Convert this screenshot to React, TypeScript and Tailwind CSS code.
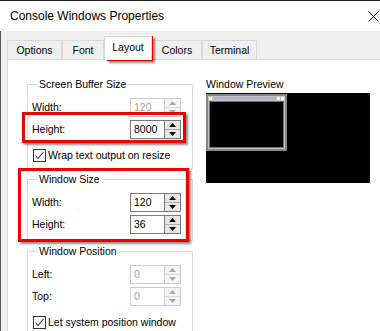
import React from "react"

const Arrow = ({ up, disabled }: { up: boolean; disabled?: boolean }) => (
    <svg width="7" height="4" viewBox="0 0 7 4">
        <polygon points={up ? "3.5,0 7,4 0,4" : "0,0 7,0 3.5,4"} fill={disabled ? "#a8a8a8" : "#000"} />
    </svg>
)

const Spin = ({ value, disabled }: { value: string; disabled?: boolean }) => (
    <div className="flex h-[19px] w-[51px]">
        <div className={"w-[35px] flex items-center pl-[3px] border bg-white " + (disabled ? "border-[#cccccc] text-[#a3a3a3]" : "border-[#7a7a7a]")}>
            {value}
        </div>
        <div className={"w-[16px] flex flex-col border border-l-0 " + (disabled ? "border-[#cccccc]" : "border-[#7a7a7a]")}>
            <div className={"flex-1 flex items-center justify-center border-b " + (disabled ? "bg-[#f4f4f4] border-[#dcdcdc]" : "bg-[#e6e6e6] border-[#adadad]")}>
                <Arrow up disabled={disabled} />
            </div>
            <div className={"flex-1 flex items-center justify-center " + (disabled ? "bg-[#f4f4f4]" : "bg-[#e6e6e6]")}>
                <Arrow up={false} disabled={disabled} />
            </div>
        </div>
    </div>
)

const Row = ({ label, value, disabled }: { label: string; value: string; disabled?: boolean }) => (
    <div className="flex items-center justify-between h-[19px]">
        <span>{label}</span>
        <Spin value={value} disabled={disabled} />
    </div>
)

const Check = ({ label }: { label: string }) => (
    <div className="flex items-center gap-[2px] ml-[1px] h-[13px]">
        <div className="w-[13px] h-[13px] border border-[#333333] bg-white flex items-center justify-center">
            <svg width="11" height="11" viewBox="0 0 11 11">
                <polyline points="1.5,5.5 4,8.5 9.5,2" fill="none" stroke="#333" strokeWidth="1.1" />
            </svg>
        </div>
        <span>{label}</span>
    </div>
)

const Group = ({ title, children }: { title: string; children: React.ReactNode }) => (
    <fieldset className="border border-[#dcdcdc] pl-[4px] pr-[11px] pt-[7px] pb-[6px] flex flex-col">
        <legend className="ml-[5px] px-[2px] leading-[13px]">{title}</legend>
        {children}
    </fieldset>
)

const tabs = [
    { name: "Options", w: "w-[55px]" },
    { name: "Font", w: "w-[42px]" },
    { name: "Layout", w: "w-[48px]", active: true },
    { name: "Colors", w: "w-[50px]" },
    { name: "Terminal", w: "w-[55px]" },
]

export default function App() {
    return (
        <div className="relative w-[380px] h-[331px] overflow-hidden bg-white text-black text-[10.5px] leading-[13px] font-['Liberation_Sans',Arial,sans-serif]">
            <div className="h-px bg-[#1f1f1f]" />
            <div className="h-[30px] flex items-center justify-between pl-[10px] pr-[1px]">
                <span className="text-[12px]">Console Windows Properties</span>
                <svg width="11" height="11" viewBox="0 0 11 11">
                    <path d="M0.5 0.5 L10.5 10.5 M10.5 0.5 L0.5 10.5" stroke="#111" strokeWidth="1" />
                </svg>
            </div>

            <div className="h-[300px] bg-[#f0f0f0] border-l border-[#555555] pl-[6px] flex flex-col">
                <div className="h-[28px] flex items-end shrink-0">
                    {tabs.map((t) =>
                        t.active ? (
                            <div key={t.name} className={t.w + " h-[24px] -mb-px relative z-10 bg-white border border-b-0 border-[#d9d9d9] flex items-center justify-center pb-[2px]"}>
                                {t.name}
                            </div>
                        ) : (
                            <div key={t.name} className={t.w + " h-[19px] bg-[#f0f0f0] border border-b-0 border-[#d9d9d9] flex items-center justify-center"}>
                                {t.name}
                            </div>
                        )
                    )}
                </div>

                <div className="flex-1 bg-white border-l border-t border-[#d9d9d9] pl-[19px] pt-[18px] flex gap-[13px]">
                    <div className="w-[166px] flex flex-col gap-[4px]">
                        <Group title="Screen Buffer Size">
                            <div className="flex flex-col gap-[3px]">
                                <Row label="Width:" value="120" disabled />
                                <Row label="Height:" value="8000" />
                            </div>
                            <div className="mt-[10px]">
                                <Check label="Wrap text output on resize" />
                            </div>
                        </Group>
                        <Group title="Window Size">
                            <div className="flex flex-col gap-[3px]">
                                <Row label="Width:" value="120" />
                                <Row label="Height:" value="36" />
                            </div>
                        </Group>
                        <Group title="Window Position">
                            <div className="flex flex-col gap-[3px]">
                                <Row label="Left:" value="0" disabled />
                                <Row label="Top:" value="0" disabled />
                            </div>
                            <div className="mt-[10px]">
                                <Check label="Let system position window" />
                            </div>
                        </Group>
                    </div>

                    <div className="flex flex-col">
                        <span className="leading-[13px]">Window Preview</span>
                        <div className="mt-[2px] w-[164px] h-[90px] bg-black pt-px">
                            <div className="w-[81px] h-[57px] border-2 border-[#858585] bg-[#c4c4c4] p-px flex flex-col">
                                <div className="h-[3px] flex gap-px">
                                    <div className="w-[3px] bg-white" />
                                    <div className="flex-1 bg-[#a3bad4]" />
                                    <div className="w-[3px] bg-white" />
                                    <div className="w-[3px] bg-white" />
                                </div>
                                <div className="flex-1 mt-px bg-black border border-[#6e6e6e]" />
                            </div>
                        </div>
                    </div>
                </div>
            </div>

            {/* red annotation boxes */}
            <div className="absolute left-[107px] top-[36px] w-[46px] h-[25px] border-[3px] border-[#ee0000] shadow-[2px_2px_2px_rgba(0,0,0,0.45)]" />
            <div className="absolute left-[22px] top-[112px] w-[164px] h-[31px] border-[3px] border-[#ee0000] shadow-[2px_2px_2px_rgba(0,0,0,0.45)]" />
            <div className="absolute left-[18px] top-[168px] w-[171px] h-[74px] border-[3px] border-[#ee0000] shadow-[2px_2px_2px_rgba(0,0,0,0.45)]" />
        </div>
    )
}
